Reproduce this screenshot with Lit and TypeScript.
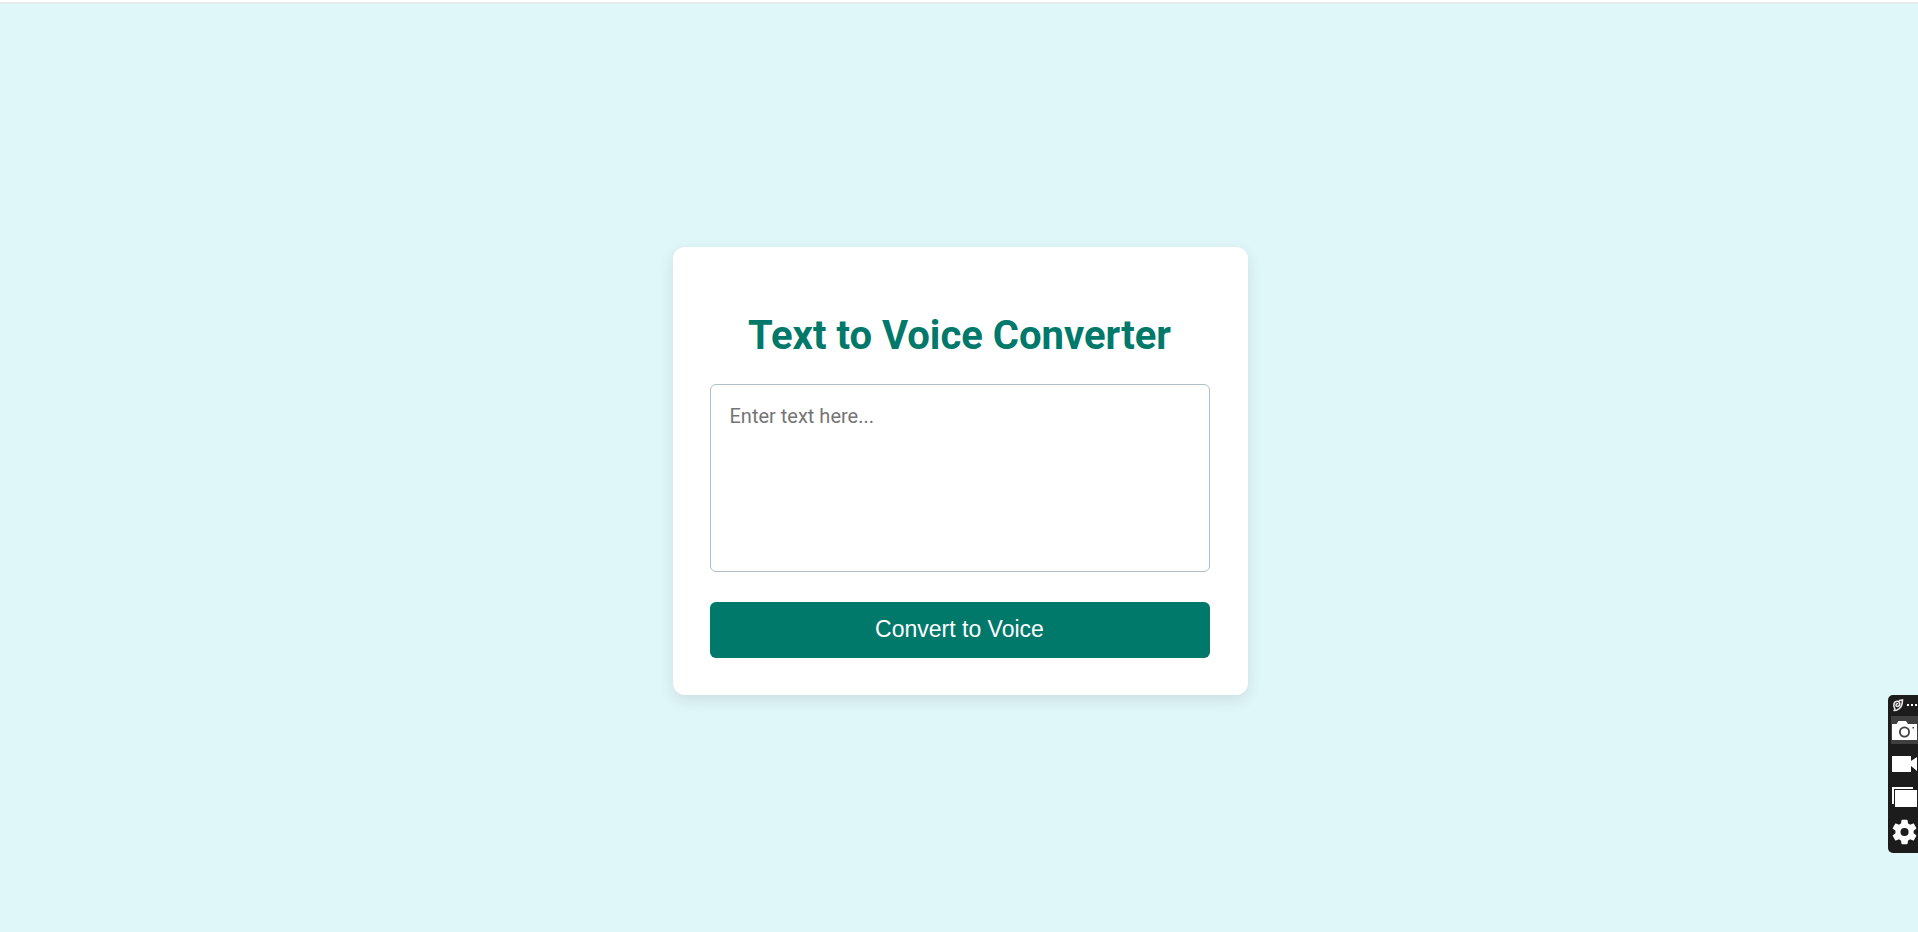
import { LitElement, html, css } from "lit";
import { customElement, state } from "lit/decorators.js";

@customElement("capture-dock")
class CaptureDock extends LitElement {
  static styles = css`
    :host {
      display: block;
      width: 30px;
      background: #1c1c1c;
      border-radius: 5px 0 0 5px;
      overflow: hidden;
    }
    .dock {
      display: grid;
      grid-template-rows: 21px 28px 36px 33px 40px;
    }
    .tool {
      display: block;
      margin: 0;
      padding: 0;
      border: 0;
      background: none;
      color: #fff;
      cursor: pointer;
    }
    .active {
      background: #3f3f3f;
      margin-left: 3px;
    }
    svg {
      display: block;
      width: 100%;
      height: 100%;
    }
  `;

  render() {
    return html`
      <nav class="dock" aria-label="Screen capture">
        <button class="tool" aria-label="More options">
          <svg viewBox="0 0 30 21">
            <g fill="none" stroke="#e8e8e8" stroke-width="1.600" stroke-linecap="round">
              <path d="M7 14.500C4.500 10 6 6 9.500 6.200C12.500 6.500 12.500 11 9.500 11.500C7.500 11.500 7.500 9 9.500 8.500" />
              <path d="M11.500 5.500L14.500 5C14.500 9.500 13.500 13.500 8.500 15.200L6 15.500" />
            </g>
            <g fill="#fff">
              <rect x="19" y="9" width="2" height="2" />
              <rect x="23" y="9" width="2" height="2" />
              <rect x="27" y="9" width="2" height="2" />
            </g>
          </svg>
        </button>
        <button class="tool active" aria-label="Take screenshot">
          <svg viewBox="0 0 27 28">
            <path fill="#fff" d="M1 8H5.500L7.500 5H15L17 8H26V24H1Z" />
            <circle cx="13.500" cy="16" r="4.600" fill="#fff" stroke="#3f3f3f" stroke-width="1.800" />
            <rect x="21.500" y="11" width="1.500" height="1.500" fill="#3f3f3f" />
          </svg>
        </button>
        <button class="tool" aria-label="Record video">
          <svg viewBox="0 0 30 36">
            <path fill="#fff" d="M4 12H23V17L29 13V27L23 22V28H4Z" />
          </svg>
        </button>
        <button class="tool" aria-label="Gallery">
          <svg viewBox="0 0 30 33">
            <path fill="#fff" d="M4 7H25V9H6V24H4Z" />
            <path fill="#fff" d="M7 10H29V27H7Z" />
          </svg>
        </button>
        <button class="tool" aria-label="Settings">
          <svg viewBox="0 0 30 40">
            <path
              fill="#fff"
              fill-rule="evenodd"
              transform="translate(1.300 3.800) scale(1.270)"
              d="M19.140 12.940c.04-.3.06-.61.06-.94s-.02-.64-.07-.94l2.030-1.580c.18-.14.23-.41.12-.61l-1.920-3.320c-.12-.22-.37-.29-.59-.22l-2.390.96c-.5-.38-1.030-.7-1.620-.94l-.36-2.540c-.04-.24-.24-.41-.48-.41h-3.840c-.24 0-.43.17-.47.41l-.36 2.540c-.59.24-1.130.57-1.620.94l-2.390-.96c-.22-.08-.47 0-.59.22L2.740 8.870c-.12.21-.08.47.12.61l2.030 1.580c-.05.3-.09.63-.09.94s.02.64.07.94l-2.030 1.580c-.18.14-.23.41-.12.61l1.920 3.320c.12.22.37.29.59.22l2.390-.96c.5.38 1.030.7 1.620.94l.36 2.540c.05.24.24.41.48.41h3.840c.24 0 .44-.17.47-.41l.36-2.540c.59-.24 1.130-.56 1.620-.94l2.390.96c.22.08.47 0 .59-.22l1.920-3.320c.12-.22.07-.47-.12-.61zM12 15.200a3.200 3.200 0 1 1 0-6.400 3.200 3.200 0 0 1 0 6.400z"
            />
          </svg>
        </button>
      </nav>
    `;
  }
}

@customElement("app-root")
class AppRoot extends LitElement {
  static styles = css`
    :host {
      display: flex;
      flex-direction: column;
      min-height: 100vh;
      box-sizing: border-box;
      background: #e0f7fa;
      font-family: Roboto, sans-serif;
    }
    .edge {
      height: 2px;
      background: #fff;
      border-bottom: 2px solid #e6ecec;
    }
    .page {
      flex: 1;
      display: grid;
      place-items: center;
      padding: 5px 16px 0 18px;
    }
    .card {
      box-sizing: border-box;
      display: flex;
      flex-direction: column;
      width: 100%;
      max-width: 575px;
      padding: 37px 38px 37px 37px;
      background: #fff;
      border-radius: 12px;
      box-shadow: 0 5px 15px rgba(0, 0, 0, 0.1);
      text-align: center;
    }
    .title {
      margin: 28px 0 24px;
      font-size: 40px;
      line-height: 48px;
      font-weight: 700;
      color: #00796b;
    }
    .text {
      box-sizing: border-box;
      width: 100%;
      height: 188px;
      margin: 0 0 30px;
      padding: 19px;
      border: 1px solid #b0bec5;
      border-radius: 6px;
      background: #fff;
      font-family: Roboto, sans-serif;
      font-size: 20px;
      line-height: 24px;
      color: #333;
      resize: none;
    }
    .text::placeholder {
      color: #757575;
    }
    .convert {
      height: 56px;
      padding: 0 20px 2px;
      border: 0;
      border-radius: 6px;
      background: #00796b;
      color: #fff;
      font-family: "Liberation Sans", Arial, sans-serif;
      font-size: 23px;
      line-height: 26px;
      cursor: pointer;
    }
    .floating {
      position: fixed;
      right: 0;
      bottom: 79px;
    }
  `;

  @state() private text = "";

  private speak() {
    if (this.text.trim()) {
      speechSynthesis.speak(new SpeechSynthesisUtterance(this.text));
    }
  }

  render() {
    return html`
      <div class="edge"></div>
      <main class="page">
        <section class="card">
          <h1 class="title" id="title">Text to Voice Converter</h1>
          <textarea
            class="text"
            aria-labelledby="title"
            placeholder="Enter text here..."
            .value=${this.text}
            @input=${(e: Event) => (this.text = (e.target as HTMLTextAreaElement).value)}
          ></textarea>
          <button class="convert" @click=${this.speak}>Convert to Voice</button>
        </section>
      </main>
      <capture-dock class="floating"></capture-dock>
    `;
  }
}
